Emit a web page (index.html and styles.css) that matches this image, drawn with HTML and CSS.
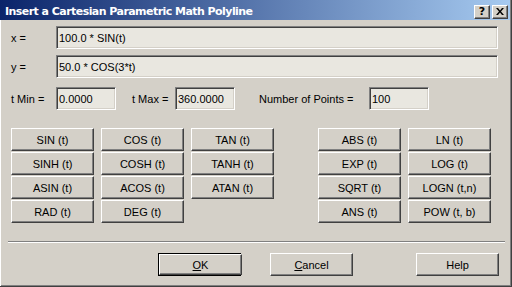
FILE: index.html
```html
<!DOCTYPE html>
<html>
<head>
<meta charset="utf-8">
<link rel="stylesheet" href="styles.css">
</head>
<body>
<div class="window">
  <div class="titlebar">
    <span class="title">Insert a Cartesian Parametric Math Polyline</span>
    <div class="caption-btns">
      <div class="cbtn help-btn">?</div>
      <div class="cbtn close-btn">
        <svg width="8" height="7" viewBox="0 0 8 7"><path d="M0 0h2l2 2.5L6 0h2L5 3.5 8 7H6L4 4.5 2 7H0l3-3.5z" fill="#000"/></svg>
      </div>
    </div>
  </div>
  <div class="client">
    <div class="row r1">
      <span class="lbl">x =</span>
      <div class="field wide">100.0 * SIN(t)</div>
    </div>
    <div class="row r2">
      <span class="lbl">y =</span>
      <div class="field wide">50.0 * COS(3*t)</div>
    </div>
    <div class="row r3">
      <span class="lbl">t Min =</span>
      <div class="field small">0.0000</div>
      <span class="lbl tmax">t Max =</span>
      <div class="field small">360.0000</div>
      <span class="lbl npts">Number of Points =</span>
      <div class="field small">100</div>
    </div>
    <div class="funcs">
      <div class="grid left">
        <div class="btn">SIN (t)</div>
        <div class="btn">COS (t)</div>
        <div class="btn">TAN (t)</div>
        <div class="btn">SINH (t)</div>
        <div class="btn">COSH (t)</div>
        <div class="btn">TANH (t)</div>
        <div class="btn">ASIN (t)</div>
        <div class="btn">ACOS (t)</div>
        <div class="btn">ATAN (t)</div>
        <div class="btn">RAD (t)</div>
        <div class="btn">DEG (t)</div>
      </div>
      <div class="grid right">
        <div class="btn">ABS (t)</div>
        <div class="btn">LN (t)</div>
        <div class="btn">EXP (t)</div>
        <div class="btn">LOG (t)</div>
        <div class="btn">SQRT (t)</div>
        <div class="btn">LOGN (t,n)</div>
        <div class="btn">ANS (t)</div>
        <div class="btn">POW (t, b)</div>
      </div>
    </div>
    <div class="sep"></div>
    <div class="actions">
      <div class="default"><div class="btn act"><u>O</u>K</div></div>
      <div class="btn act cancel"><u>C</u>ancel</div>
      <div class="btn act helpb">Help</div>
    </div>
  </div>
</div>
</body>
</html>
```
FILE: styles.css
```css
html, body {
  margin: 0;
  padding: 0;
}
body {
  width: 512px;
  height: 287px;
  overflow: hidden;
  background: #d4d0c8;
  font-family: "Liberation Sans", Arial, sans-serif;
  font-size: 11px;
  color: #000;
}
.window {
  width: 512px;
  height: 287px;
  box-sizing: border-box;
  display: flex;
  flex-direction: column;
  background: #d4d0c8;
  border-right: 1px solid #404040;
  border-bottom: 1px solid #404040;
  box-shadow: inset -1px -1px #808080;
}
.titlebar {
  height: 20px;
  margin-right: 1px;
  flex: none;
  display: flex;
  align-items: center;
  justify-content: space-between;
  background: linear-gradient(to right, #0a246a, #a6caf0);
  color: #fff;
}
.title {
  font-weight: bold;
  font-size: 11px;
  padding-left: 5px;
  padding-top: 2px;
  font-family: "DejaVu Sans", sans-serif;
  letter-spacing: -0.55px;
}
.caption-btns {
  display: flex;
  gap: 2px;
  padding-right: 2px;
  padding-top: 3px;
}
.cbtn {
  width: 16px;
  height: 14px;
  box-sizing: border-box;
  background: #d4d0c8;
  border: 1px solid;
  border-color: #fff #404040 #404040 #fff;
  box-shadow: inset -1px -1px #808080;
  display: flex;
  align-items: center;
  justify-content: center;
  color: #000;
}
.help-btn {
  font-weight: bold;
  font-size: 11px;
  font-family: "DejaVu Sans", sans-serif;
  line-height: 1;
  padding-bottom: 1px;
}
.close-btn svg {
  display: block;
  margin-bottom: 1px;
}
.client {
  flex: 1;
  border-left: 1px solid #fff;
  padding: 6px 0 0 10px;
  display: flex;
  flex-direction: column;
}
.row {
  display: flex;
  align-items: center;
  height: 23px;
}
.r2 { margin-top: 6px; }
.r3 { margin-top: 9px; }
.lbl {
  width: 45px;
  flex: none;
}
.lbl.tmax {
  margin-left: 16px;
  width: 43px;
}
.lbl.npts {
  margin-left: 24px;
  width: 110px;
}
.field {
  height: 23px;
  box-sizing: border-box;
  border: 1px solid;
  border-color: #808080 #fff #fff #808080;
  box-shadow: inset 1px 1px #404040, inset -1px -1px #d4d0c8;
  background: #e9e7e0;
  padding-left: 2px;
  display: flex;
  align-items: center;
}
.field.wide { width: 442px; }
.field.small { width: 60px; }
.funcs {
  display: flex;
  margin-top: 18px;
}
.grid {
  display: grid;
  grid-auto-rows: 23px;
  row-gap: 1px;
  column-gap: 7px;
}
.grid.left { grid-template-columns: repeat(3, 83px); }
.grid.right {
  grid-template-columns: repeat(2, 83px);
  margin-left: 44px;
}
.btn {
  box-sizing: border-box;
  height: 23px;
  background: #d4d0c8;
  border: 1px solid;
  border-color: #fff #404040 #404040 #fff;
  box-shadow: inset -1px -1px #808080;
  display: flex;
  align-items: center;
  justify-content: center;
}
.sep {
  margin: 18px 6px 0 -3px;
  height: 0;
  border-top: 1px solid #808080;
  border-bottom: 1px solid #fff;
}
.actions {
  display: flex;
  margin-top: 10px;
}
.default {
  margin-left: 147px;
  border: 1px solid #000;
  width: 83px;
  height: 23px;
  box-sizing: border-box;
}
.default .btn {
  height: 21px;
}
.act { width: 83px; }
.cancel { margin-left: 29px; }
.helpb { margin-left: 63px; }
u { text-underline-offset: 1px; }
```
